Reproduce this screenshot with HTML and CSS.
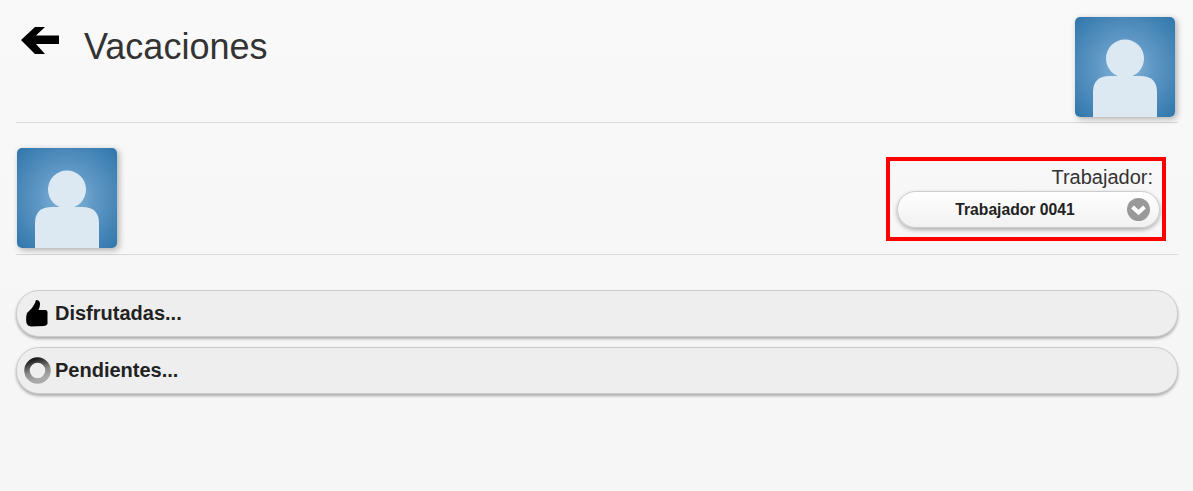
FILE: index.html
```html
<!DOCTYPE html>
<html lang="en">
<head>
    <meta charset="UTF-8">
    <title>Vacaciones</title>
    <link rel="stylesheet" href="styles.css">
</head>
<body>
    <header class="top-bar">
        <svg class="back-icon" viewBox="0 0 40 30" width="40" height="30" aria-label="Volver">
            <path d="M15 1 L25 1 L16 9.500 L39 9.500 L39 18 L16 18 L25 28 L15 28 L1 14 Z"/>
        </svg>
        <h1 class="page-title">Vacaciones</h1>
        <div class="avatar">
            <svg viewBox="0 0 100 100" width="100" height="100"><use href="#person"/></svg>
        </div>
    </header>

    <section class="worker-row">
        <div class="avatar">
            <svg viewBox="0 0 100 100" width="100" height="100">
                <defs>
                    <g id="person">
                        <circle cx="50" cy="41.500" r="19"/>
                        <path d="M18 100 V75 Q18 59 35 59 H65 Q82 59 82 75 V100 Z"/>
                    </g>
                </defs>
                <use href="#person"/>
            </svg>
        </div>
        <div class="worker-box">
            <label class="worker-label">Trabajador:</label>
            <div class="select-btn">
                <span class="select-text">Trabajador 0041</span>
                <span class="select-arrow">
                    <svg viewBox="0 0 23 23" width="23" height="23">
                        <path d="M5.500 9 L11.500 14.500 L17.500 9" fill="none" stroke="#fff" stroke-width="4"/>
                    </svg>
                </span>
            </div>
        </div>
    </section>

    <div class="collapsible">
        <span class="icon-slot">
            <svg class="row-icon thumb" viewBox="0 0 22 27" width="22" height="27">
                <path d="M1 13 L6 8 Q8 5 9 3 L10 0 Q14 0 14 4 Q14 7 12.500 10 L20 10 Q22 11 21.500 13.500 L21.500 24 Q20 26 18 26 L5 26.500 Q1.500 26 0.500 23 Q-0.500 18 1 13 Z"/>
            </svg>
        </span>
        <span class="row-label">Disfrutadas...</span>
    </div>
    <div class="collapsible">
        <span class="icon-slot">
            <svg class="row-icon" viewBox="0 0 27 27" width="27" height="27">
                <defs>
                    <linearGradient id="ring" x1="0" y1="0" x2="0.300" y2="1">
                        <stop offset="0" stop-color="#111"/>
                        <stop offset="0.350" stop-color="#555"/>
                        <stop offset="0.600" stop-color="#888"/>
                        <stop offset="1" stop-color="#aaa"/>
                    </linearGradient>
                </defs>
                <circle cx="13.500" cy="13.500" r="10.500" fill="none" stroke="url(#ring)" stroke-width="5.500"/>
            </svg>
        </span>
        <span class="row-label">Pendientes...</span>
    </div>
</body>
</html>
```

FILE: styles.css
```css
html, body {
    height: 100%;
}
body {
    margin: 0;
    padding: 0 15px 0 16px;
    background: linear-gradient(#f9f9f9, #f6f6f6 70%);
    font-family: "Liberation Sans", Arial, sans-serif;
    color: #333;
    overflow: hidden;
}
.top-bar {
    display: flex;
    align-items: flex-start;
    height: 122px;
    border-bottom: 1px solid #d9d9d9;
}
.back-icon {
    margin: 26px 0 0 4px;
    flex: none;
}
.page-title {
    margin: 27px 0 0 24px;
    font-size: 36px;
    font-weight: normal;
    line-height: 40px;
    flex: 1;
}
.top-bar .avatar {
    margin: 17px 3px 0 0;
}
.avatar {
    width: 100px;
    height: 100px;
    border-radius: 5px;
    overflow: hidden;
    flex: none;
    background: radial-gradient(circle at 50% 50%, #8dbbdc 0%, #6199c6 38%, #2f76ab 100%);
    box-shadow: 2px 2px 6px rgba(0,0,0,0.3);
}
.avatar svg {
    display: block;
    fill: #dde9f2;
}
.worker-row {
    display: flex;
    justify-content: space-between;
    align-items: flex-start;
    height: 132px;
    padding: 25px 12px 0 1px;
    box-sizing: border-box;
    border-bottom: 1px solid #d9d9d9;
}
.worker-box {
    width: 280px;
    height: 84px;
    margin-top: 9px;
    box-sizing: border-box;
    border: 4px solid #f00;
    padding: 5px 2px 0 7px;
    text-align: right;
}
.worker-label {
    display: block;
    font-size: 20px;
    line-height: 22px;
    padding-right: 7px;
    margin-bottom: 3px;
}
.select-btn {
    display: flex;
    align-items: center;
    height: 37px;
    box-sizing: border-box;
    border: 1px solid #ccc;
    border-radius: 19px;
    background: linear-gradient(#fff, #f1f1f1);
    box-shadow: 0 2px 4px rgba(0,0,0,0.3);
}
.select-text {
    flex: 1;
    padding-left: 5px;
    text-align: center;
    font-size: 15.700px;
    font-weight: bold;
    color: #222;
}
.select-arrow {
    width: 23px;
    height: 23px;
    margin-right: 9px;
    border-radius: 50%;
    background: #999;
    display: flex;
}
.collapsible {
    display: flex;
    align-items: center;
    height: 47px;
    box-sizing: border-box;
    margin-bottom: 10px;
    width: 1162px;
    padding-left: 7px;
    border: 1px solid #ccc;
    border-radius: 23px;
    background: #eee;
    box-shadow: 0 2px 3px rgba(0,0,0,0.3);
}
.worker-row + .collapsible {
    margin-top: 35px;
}
.icon-slot {
    width: 31px;
    display: flex;
}
.row-icon {
    display: block;
    fill: #000;
}
.thumb {
    margin-left: 2px;
}
.row-label {
    font-size: 20px;
    font-weight: bold;
    color: #222;
}
```
